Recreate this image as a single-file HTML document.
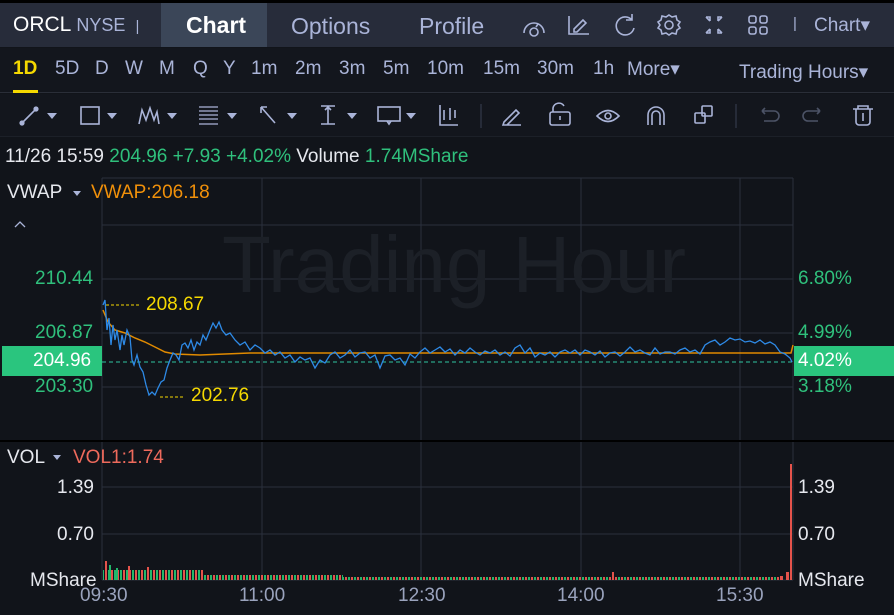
<!DOCTYPE html>
<html><head><meta charset="utf-8"><style>
*{margin:0;padding:0;box-sizing:border-box}
body{width:894px;height:615px;background:#11141a;font-family:"Liberation Sans",sans-serif;position:relative;overflow:hidden;color:#c9ccd6}
.a{position:absolute;white-space:nowrap}
#top{position:absolute;left:0;top:3px;width:894px;height:44px;background:#272c3a}
#row2{position:absolute;left:0;top:48px;width:894px;height:45px;background:#13161d;border-bottom:1px solid #2a2e38}
#row3{position:absolute;left:0;top:94px;width:894px;height:42px;background:#13161d}
.tf{top:58px;font-size:19px;color:#aab4d8}
.g{color:#2fc07c}
.f{font-size:19px}
svg{position:absolute;left:0;top:0}
</style></head><body>
<div class="a" style="left:0;top:0;width:894px;height:3px;background:#000"></div>
<div id="top"></div>
<div class="a" style="left:161px;top:3px;width:106px;height:44px;background:#3b4658"></div>
<div class="a" style="left:13px;top:13px;font-size:21px;color:#fff">ORCL <span style="font-size:18px;color:#aab4d8">NYSE</span> <span style="font-size:15px;color:#aab4d8">&nbsp;|</span></div>
<div class="a" style="left:186px;top:12px;font-size:23px;color:#fff;font-weight:bold">Chart</div>
<div class="a" style="left:291px;top:13px;font-size:23px;color:#aab4d8">Options</div>
<div class="a" style="left:419px;top:13px;font-size:23px;color:#aab4d8">Profile</div>
<div class="a" style="left:793px;top:15px;font-size:15px;color:#aab4d8">|</div>
<div class="a" style="left:814px;top:14px;font-size:19px;color:#aab4d8">Chart&#9662;</div>
<div id="row2"></div>
<div class="a tf" style="left:13px;color:#f5d800;font-weight:bold">1D</div>
<div class="a" style="left:13px;top:90px;width:25px;height:3px;background:#f5d800"></div>
<div class="a tf" style="left:55px">5D</div>
<div class="a tf" style="left:95px">D</div>
<div class="a tf" style="left:125px">W</div>
<div class="a tf" style="left:159px">M</div>
<div class="a tf" style="left:193px">Q</div>
<div class="a tf" style="left:223px">Y</div>
<div class="a tf" style="left:251px">1m</div>
<div class="a tf" style="left:295px">2m</div>
<div class="a tf" style="left:339px">3m</div>
<div class="a tf" style="left:383px">5m</div>
<div class="a tf" style="left:427px">10m</div>
<div class="a tf" style="left:483px">15m</div>
<div class="a tf" style="left:537px">30m</div>
<div class="a tf" style="left:593px">1h</div>
<div class="a tf" style="left:627px">More&#9662;</div>
<div class="a tf" style="left:739px;top:61px">Trading Hours&#9662;</div>
<div id="row3"></div>
<div class="a" style="left:0;top:136px;width:894px;height:1px;background:#1c2028"></div>
<svg width="894" height="615" viewBox="0 0 894 615" fill="none" stroke="#aab4d8" stroke-width="1.6">
<path d="M524 33a10 10 0 0 1 20 0M530 32a4 4 0 1 0 8 0 4 4 0 1 0-8 0M536 27l2-3"/>
<path d="M569 16v18h20M574 29l9-9 3 3-9 9h-3z"/>
<path d="M632 20a9 9 0 1 0 2 8M632 14v6h-6"/>
<circle cx="669" cy="25" r="4"/><path d="M669 15l3 2 4-1 1 4 3 2-2 3 2 3-3 2-1 4-4-1-3 2-3-2-4 1-1-4-3-2 2-3-2-3 3-2 1-4 4 1z"/>
<path d="M706 17h4v4M706 17l4 4M722 17h-4v4M722 17l-4 4M706 33h4v-4M706 33l4-4M722 33h-4v-4M722 33l-4-4"/>
<rect x="749" y="16" width="7" height="7" rx="2"/><rect x="760" y="16" width="7" height="7" rx="2"/><rect x="749" y="27" width="7" height="7" rx="2"/><rect x="760" y="27" width="7" height="7" rx="2"/>
<path d="M22 123l14-14"/><circle cx="22" cy="123" r="1.8" fill="#aab4d8"/><circle cx="36" cy="109" r="1.8" fill="#aab4d8"/>
<rect x="81" y="107" width="18" height="17"/>
<path d="M139 124l3-14 4 10 4-12 4 12 3-8 2 12"/>
<path d="M199 107h19M199 111h19M199 115h19M199 119h19M199 124h19" stroke-width="1.2"/>
<path d="M261 107l14 16M261 107h6M261 107v6"/>
<path d="M321 106h14M321 124h14M328 106v18M325 110l3-3 3 3"/>
<rect x="378" y="107" width="22" height="14"/><path d="M387 121l2 3 2-3"/>
<path d="M440 105v20h18M444 110v10M450 108v12M455 110v8" />
<path d="M481 104v24" stroke="#2c3140"/>
<path d="M504 122l12-12 3 3-12 12h-4zM507 125h14"/>
<rect x="550" y="112" width="20" height="13" rx="2"/><path d="M553 112v-4a6 6 0 0 1 11-2M560 116v4"/>
<path d="M597 116q11-11 22 0q-11 11-22 0z"/><circle cx="608" cy="116" r="3"/>
<path d="M648 125v-10a8 8 0 0 1 16 0v10M652 125v-10a4 4 0 0 1 8 0v10"/>
<rect x="695" y="113" width="10" height="10" rx="1"/><rect x="702" y="106" width="10" height="10" rx="1"/>
<path d="M736 104v24" stroke="#2c3140"/>
<path stroke="#4c5366" d="M762 111h12a5 5 0 0 1 0 10h-10M762 111l3-3M762 111l3 3M820 111h-12a5 5 0 0 0 0 10h10M820 111l-3-3M820 111l-3 3"/>
<path d="M853 109h20M858 109v-3h10v3M856 109v13a3 3 0 0 0 3 3h8a3 3 0 0 0 3-3v-13M863 113v8"/>
<g fill="#aab4d8" stroke="none">
<path d="M47 113h10l-5 6zM107 113h10l-5 6zM167 113h10l-5 6zM227 113h10l-5 6zM287 113h10l-5 6zM347 113h10l-5 6zM406 113h10l-5 6z"/>
<path d="M73 191h8l-4 5zM53 455h8l-4 5z"/>
</g>
<path d="M15 227l5-5 5 5" stroke-width="1.3"/>
<g stroke="#2b303c" stroke-width="1">
<path d="M102 178v402M262 178v402M421 178v402M581 178v402M740 178v402M793 178v402"/>
<path d="M102 178h691M102 225h691M102 279h691M102 333h691M102 387h691M102 487h691M102 534h691M102 580h691"/>
</g>
<path d="M0 441h894" stroke="#000" stroke-width="2"/>
<text x="454" y="292" font-family="Liberation Sans" font-size="80" fill="#1c2027" stroke="none" text-anchor="middle">Trading Hour</text>
<path d="M102 362h691" stroke="#2ec4a0" stroke-width="1" stroke-dasharray="4 3"/>
<path d="M106 305h35M160 397h25" stroke="#f5d800" stroke-width="1" stroke-dasharray="3 2"/>
<polyline stroke="#e08a00" stroke-width="1.5" points="103,310 108,322 115,330 125,333 135,338 145,342 155,347 165,352 175,354 200,355 250,353 791,353 793,345"/>
<polyline stroke="#2e8ae6" stroke-width="1.3" points="103,305 105,300 107,330 109,318 111,345 113,325 115,340 117,330 120,350 122,335 124,345 127,330 130,337 132,360 134,365 137,355 140,367 143,372 146,385 149,395 152,392 155,395 158,388 161,382 164,380 167,368 170,360 173,353 176,355 179,360 182,345 185,343 188,348 191,340 194,350 197,342 200,345 203,335 206,340 210,330 213,323 216,328 219,322 222,330 226,335 230,333 235,340 240,345 245,342 250,350 255,345 260,348 265,353 270,350 275,355 280,352 285,358 290,355 295,362 300,357 305,360 310,358 315,368 320,360 325,363 330,355 335,352 340,358 345,355 350,350 355,357 360,353 365,352 370,358 375,355 380,368 385,356 390,355 395,360 400,358 405,365 410,354 415,358 420,352 425,348 430,353 435,350 440,347 445,352 450,349 455,355 460,350 465,353 470,348 475,352 480,355 485,351 490,353 495,350 500,355 505,352 510,356 515,348 520,345 525,353 530,348 535,357 540,353 545,355 550,352 555,357 560,352 565,350 570,353 575,350 580,355 585,350 590,352 595,355 600,351 605,357 610,353 615,352 620,356 625,352 630,347 635,352 640,350 645,353 650,355 655,348 660,354 665,352 670,352 675,354 680,350 685,348 690,352 695,350 700,354 705,345 710,342 715,340 720,345 725,342 730,338 735,340 740,339 745,342 750,341 755,343 760,340 765,344 770,342 775,345 780,352 785,354 790,358 792,362"/>
<defs>
<pattern id="vp" width="6" height="20" patternUnits="userSpaceOnUse"><rect x="0" y="0" width="2" height="20" fill="#22b86a" stroke="none"/><rect x="3" y="0" width="2" height="20" fill="#e5534b" stroke="none"/></pattern>
</defs>
<rect x="103" y="570" width="100" height="10" fill="url(#vp)" stroke="none"/>
<rect x="203" y="575" width="140" height="5" fill="url(#vp)" stroke="none"/>
<rect x="343" y="577" width="440" height="3" fill="url(#vp)" stroke="none"/>
<g stroke="none" fill="#e5534b">
<rect x="105" y="561" width="2" height="19"/><rect x="128" y="566" width="2" height="14"/><rect x="147" y="567" width="2" height="13"/><rect x="612" y="572" width="2" height="8"/>
<rect x="790" y="464" width="2" height="116"/><rect x="786" y="572" width="3" height="8"/><rect x="780" y="576" width="3" height="4"/>
</g>
<g stroke="none" fill="#22b86a"><rect x="109" y="565" width="2" height="15"/><rect x="116" y="568" width="2" height="12"/></g>
</svg>
<div class="a f" style="left:5px;top:146px;color:#e6e8ee">11/26 15:59 <span class="g">204.96 +7.93 +4.02%</span> Volume <span class="g">1.74MShare</span></div>
<div class="a f" style="left:7px;top:182px;color:#e6e8ee">VWAP</div>
<div class="a f" style="left:91px;top:182px;color:#f0900a">VWAP:206.18</div>
<div class="a g f" style="left:35px;top:268px">210.44</div>
<div class="a g f" style="left:35px;top:322px">206.87</div>
<div class="a g f" style="left:35px;top:376px">203.30</div>
<div class="a" style="left:2px;top:346px;width:100px;height:30px;background:#2ac57e"></div>
<div class="a f" style="left:33px;top:350px;color:#fff">204.96</div>
<div class="a f" style="left:146px;top:294px;color:#f5d800">208.67</div>
<div class="a f" style="left:191px;top:385px;color:#f5d800">202.76</div>
<div class="a g f" style="left:798px;top:268px">6.80%</div>
<div class="a g f" style="left:798px;top:322px">4.99%</div>
<div class="a" style="left:794px;top:346px;width:100px;height:30px;background:#2ac57e"></div>
<div class="a f" style="left:798px;top:350px;color:#fff">4.02%</div>
<div class="a g f" style="left:798px;top:376px">3.18%</div>
<div class="a f" style="left:7px;top:447px;color:#e6e8ee">VOL</div>
<div class="a f" style="left:73px;top:447px;color:#ee6a5c">VOL1:1.74</div>
<div class="a f" style="left:57px;top:477px;color:#e6e8ee">1.39</div>
<div class="a f" style="left:57px;top:524px;color:#e6e8ee">0.70</div>
<div class="a f" style="left:30px;top:570px;color:#e6e8ee">MShare</div>
<div class="a f" style="left:798px;top:477px;color:#e6e8ee">1.39</div>
<div class="a f" style="left:798px;top:524px;color:#e6e8ee">0.70</div>
<div class="a f" style="left:798px;top:570px;color:#e6e8ee">MShare</div>
<div class="a f" style="left:80px;top:585px;color:#9aa3bd">09:30</div>
<div class="a f" style="left:239px;top:585px;color:#9aa3bd">11:00</div>
<div class="a f" style="left:398px;top:585px;color:#9aa3bd">12:30</div>
<div class="a f" style="left:557px;top:585px;color:#9aa3bd">14:00</div>
<div class="a f" style="left:716px;top:585px;color:#9aa3bd">15:30</div>
</body></html>
